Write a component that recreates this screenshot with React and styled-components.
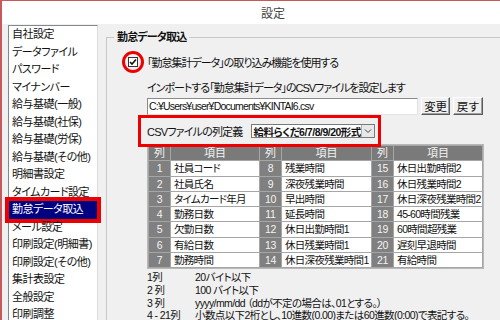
import React from 'react';
import styled, { createGlobalStyle } from 'styled-components';

const GlobalStyle = createGlobalStyle`
  html, body {
    margin: 0;
    padding: 0;
    overflow: hidden;
    background: #f0f0f0;
  }
`;

const menuItems = [
  '自社設定',
  'データファイル',
  'パスワード',
  'マイナンバー',
  '給与基礎(一般)',
  '給与基礎(社保)',
  '給与基礎(労保)',
  '給与基礎(その他)',
  '明細書設定',
  'タイムカード設定',
  '勤怠データ取込',
  'メール設定',
  '印刷設定(明細書)',
  '印刷設定(その他)',
  '集計表設定',
  '全般設定',
  '印刷調整',
];

const columns = [
  ['1', '社員コード', '8', '残業時間', '15', '休日出勤時間2'],
  ['2', '社員氏名', '9', '深夜残業時間', '16', '休日残業時間2'],
  ['3', 'タイムカード年月', '10', '早出時間', '17', '休日深夜残業時間2'],
  ['4', '勤務日数', '11', '延長時間', '18', '45-60時間残業'],
  ['5', '欠勤日数', '12', '休日出勤時間1', '19', '60時間超残業'],
  ['6', '有給日数', '13', '休日残業時間1', '20', '遅刻早退時間'],
  ['7', '勤務時間', '14', '休日深夜残業時間1', '21', '有給時間'],
];

const notes = [
  ['1列', '20バイト以下'],
  ['2 列', '100 バイト以下'],
  ['3 列', 'yyyy/mm/dd （ddが不定の場合は、01とする。）'],
  ['4 - 21列', '小数点以下2桁とし、10進数(0.00)または60進数(0:00)で表記する。'],
];

const Frame = styled.div`
  width: 500px;
  height: 320px;
  box-sizing: border-box;
  border-left: 2px solid #c8585c;
  border-top: 1px solid #c8585c;
  background: #f0f0f0;
  font-family: "Liberation Sans", "Noto Sans CJK JP", sans-serif;
  font-size: 11px;
  font-feature-settings: "palt";
  letter-spacing: -0.8px;
  color: #111;
  display: flex;
  flex-direction: column;
  overflow: hidden;
`;

const TitleBar = styled.div`
  height: 23px;
  flex-shrink: 0;
  background: #fff;
  display: flex;
  align-items: center;
  justify-content: center;
  padding-left: 44px;
  color: #444;
  font-size: 12px;
  letter-spacing: 0;
`;

const Body = styled.div`
  flex: 1;
  display: flex;
  padding: 1px 0 0 6px;
`;

const Sidebar = styled.ul`
  list-style: none;
  margin: 0;
  padding: 0;
  width: 88px;
  flex-shrink: 0;
  background: #fff;
  border-left: 1px solid #828790;
  border-top: 1px solid #828790;
  border-right: 1px solid #dcdcdc;
`;

const MenuItem = styled.li`
  height: 17.5px;
  line-height: 17.5px;
  padding-left: 3px;
  white-space: nowrap;
  letter-spacing: -0.5px;
  background: ${(p) => (p.$active ? '#000080' : 'transparent')};
  color: ${(p) => (p.$active ? '#fff' : '#111')};
  outline: ${(p) => (p.$active ? '4px solid #ee0000' : 'none')};
  position: relative;
`;

const Main = styled.div`
  flex: 1;
  padding: 5px 0 0 8px;
`;

const Group = styled.fieldset`
  margin: 0 -20px 0 0;
  padding: 0;
  border: 1px solid #c8c8c8;
  border-right: none;
  border-bottom: none;
  height: 320px;
  min-width: 0;
`;

const Legend = styled.legend`
  margin-left: 7px;
  padding: 0 3px;
  font-weight: bold;
  line-height: 14px;
`;

const Content = styled.div`
  padding-left: 21px;
`;

const CheckRow = styled.div`
  margin-top: 10px;
  height: 16px;
  display: flex;
  align-items: center;
  gap: 9px;
  letter-spacing: -1px;
`;

const CheckWrap = styled.span`
  position: relative;
  width: 10px;
  height: 10px;
  display: inline-flex;
`;

const Box = styled.span`
  width: 10px;
  height: 10px;
  box-sizing: border-box;
  border: 1px solid #333;
  background: #fff;
  display: flex;
  align-items: center;
  justify-content: center;
`;

const Ring = styled.span`
  position: absolute;
  left: -6px;
  top: -6px;
  width: 22px;
  height: 22px;
  box-sizing: border-box;
  border: 3px solid #ee0000;
  border-radius: 50%;
`;

const Indent = styled.div`
  padding-left: 19px;
  display: flex;
  flex-direction: column;
  align-items: flex-start;
`;

const Hint = styled.div`
  margin-top: 11px;
  line-height: 14px;
  letter-spacing: -1px;
`;

const PathRow = styled.div`
  margin-top: 2px;
  display: flex;
  align-items: center;
  gap: 3px;
`;

const PathInput = styled.div`
  width: 271px;
  height: 17px;
  box-sizing: border-box;
  background: #fff;
  border: 1px solid;
  border-color: #8a8a8a #e3e3e3 #e3e3e3 #8a8a8a;
  font-size: 10.5px;
  line-height: 15px;
  padding-left: 1px;
  letter-spacing: -0.8px;
`;

const Button = styled.button`
  width: ${(p) => p.$w}px;
  height: 18px;
  padding: 0;
  box-sizing: border-box;
  background: #f0f0f0;
  border: 1px solid;
  border-color: #fff #5a5a5a #5a5a5a #fff;
  box-shadow: inset -1px -1px 0 #a0a0a0;
  font-family: inherit;
  font-size: 11.5px;
  letter-spacing: -0.3px;
  color: #111;
`;

const CsvRow = styled.div`
  margin-top: 6px;
  height: 20px;
  width: 228px;
  display: flex;
  align-items: center;
  gap: 8px;
  outline: 3px solid #ee0000;
  outline-offset: 3px;
  position: relative;
  left: -3px;
  padding-left: 3px;
`;

const CsvLabel = styled.span`
  white-space: nowrap;
`;

const Select = styled.div`
  width: 129px;
  height: 14px;
  box-sizing: border-box;
  background: #fff;
  border: 1px solid #7a7a7a;
  display: flex;
  align-items: center;
  justify-content: space-between;
  font-weight: bold;
  font-size: 10.5px;
  letter-spacing: -0.5px;
  padding-left: 2px;
  white-space: nowrap;
  overflow: hidden;
`;

const Arrow = styled.span`
  width: 12px;
  height: 12px;
  background: #e8e8e8;
  border-left: 1px solid #b0b0b0;
  display: flex;
  align-items: center;
  justify-content: center;
  flex-shrink: 0;
`;

const Table = styled.div`
  margin-top: 3px;
  display: grid;
  grid-template-columns: 21px 88px 21px 89px 21px 88px;
  grid-auto-rows: 14.3px;
  gap: 1px;
  padding: 1px;
  border: 1px solid #b8b8b8;
  background: #a6a6a6;
`;

const Head = styled.div`
  background: #7a7a7a;
  color: #f4f4f4;
  text-align: center;
  line-height: 14px;
  font-size: 11px;
  letter-spacing: 0;
`;

const Num = styled.div`
  background: #808080;
  color: #f4f4f4;
  text-align: center;
  line-height: 14.3px;
  font-size: 10.5px;
  letter-spacing: -0.3px;
`;

const Cell = styled.div`
  background: #fff;
  padding-left: 3px;
  line-height: 14.3px;
  font-size: 10.5px;
  white-space: nowrap;
  overflow: hidden;
  letter-spacing: -0.7px;
`;

const Notes = styled.div`
  margin-top: 2px;
  display: grid;
  grid-template-columns: 48px auto;
  font-size: 10.5px;
  line-height: 12.7px;
  letter-spacing: -0.6px;
  white-space: nowrap;
`;

const Check = () => (
  <svg width="8" height="8" viewBox="0 0 8 8">
    <path d="M1 4 L3 6 L7 1.5" fill="none" stroke="#111" strokeWidth="1.6" />
  </svg>
);

const Chevron = () => (
  <svg width="8" height="6" viewBox="0 0 8 6">
    <path d="M1 1.5 L4 4.5 L7 1.5" fill="none" stroke="#444" strokeWidth="1" />
  </svg>
);

export default function App() {
  return (
    <>
      <GlobalStyle />
      <Frame>
        <TitleBar>設定</TitleBar>
        <Body>
          <Sidebar>
            {menuItems.map((m) => (
              <MenuItem key={m} $active={m === '勤怠データ取込'}>
                {m}
              </MenuItem>
            ))}
          </Sidebar>
          <Main>
            <Group>
              <Legend>勤怠データ取込</Legend>
              <Content>
                <CheckRow>
                  <CheckWrap>
                    <Box>
                      <Check />
                    </Box>
                    <Ring />
                  </CheckWrap>
                  <span>「勤怠集計データ」の取り込み機能を使用する</span>
                </CheckRow>
                <Indent>
                  <Hint>インポートする「勤怠集計データ」のCSVファイルを設定します</Hint>
                  <PathRow>
                    <PathInput>C:¥Users¥user¥Documents¥KINTAI6.csv</PathInput>
                    <Button $w={29}>変更</Button>
                    <Button $w={30}>戻す</Button>
                  </PathRow>
                  <CsvRow>
                    <CsvLabel>CSVファイルの列定義</CsvLabel>
                    <Select>
                      給料らくだ6/7/8/9/20形式
                      <Arrow>
                        <Chevron />
                      </Arrow>
                    </Select>
                  </CsvRow>
                  <Table>
                    <Head>列</Head>
                    <Head>項目</Head>
                    <Head>列</Head>
                    <Head>項目</Head>
                    <Head>列</Head>
                    <Head>項目</Head>
                    {columns.map((row) =>
                      row.map((v, i) =>
                        i % 2 === 0 ? <Num key={v}>{v}</Num> : <Cell key={v}>{v}</Cell>
                      )
                    )}
                  </Table>
                  <Notes>
                    {notes.map(([a, b]) => (
                      <React.Fragment key={a}>
                        <span>{a}</span>
                        <span>{b}</span>
                      </React.Fragment>
                    ))}
                  </Notes>
                </Indent>
              </Content>
            </Group>
          </Main>
        </Body>
      </Frame>
    </>
  );
}
